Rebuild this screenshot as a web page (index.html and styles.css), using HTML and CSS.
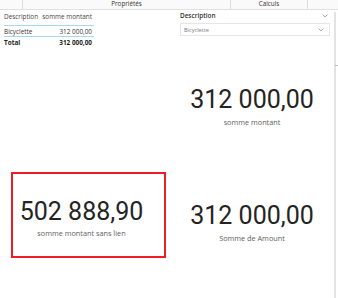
FILE: index.html
```html
<!DOCTYPE html>
<html lang="fr">
<head>
    <meta charset="UTF-8">
    <meta name="viewport" content="width=device-width, initial-scale=1.0">
    <title>Rapport</title>
    <link rel="stylesheet" href="styles.css">
</head>
<body>
    <div class="topbar">
        <div class="tab tab-first"></div>
        <div class="tab tab-props">Propriétés</div>
        <div class="tab tab-calc">Calculs</div>
        <div class="tab tab-last"></div>
    </div>
    <div class="canvas">
        <div class="left">
            <div class="tbl">
                <div class="row head">
                    <div class="col-desc">Description</div>
                    <div class="col-val">somme montant</div>
                </div>
                <div class="row line">
                    <div class="col-desc">Bicyclette</div>
                    <div class="col-val">312 000,00</div>
                </div>
                <div class="row total">
                    <div class="col-desc">Total</div>
                    <div class="col-val">312 000,00</div>
                </div>
            </div>
            <div class="card card-marked">
                <div class="big">502 888,90</div>
                <div class="label">somme montant sans lien</div>
            </div>
        </div>
        <div class="right">
            <div class="slicer">
                <div class="slicer-head">
                    <span>Description</span>
                    <svg class="chev" width="6" height="4" viewBox="0 0 6 4"><polyline points="0.5,0.5 3,3 5.5,0.5" fill="none" stroke="#999" stroke-width="0.8"/></svg>
                </div>
                <div class="dropdown">
                    <span>Bicyclette</span>
                    <svg class="chev" width="6" height="4" viewBox="0 0 6 4"><polyline points="0.5,0.5 3,3 5.5,0.5" fill="none" stroke="#999" stroke-width="0.8"/></svg>
                </div>
            </div>
            <div class="card card-one">
                <div class="big">312 000,00</div>
                <div class="label">somme montant</div>
            </div>
            <div class="card card-two">
                <div class="big">312 000,00</div>
                <div class="label">Somme de Amount</div>
            </div>
        </div>
        <div class="scroll"><span class="tick"></span></div>
    </div>
</body>
</html>
```

FILE: styles.css
```css
body {
    margin: 0;
    background: #fff;
    font-family: "Open Sans", "Noto Sans", sans-serif;
    color: #333;
}
.topbar {
    display: flex;
    height: 9px;
    border-bottom: 1px solid #e1e1e1;
    background: #fafafa;
    overflow: hidden;
}
.tab {
    border-right: 1px solid #dcdcdc;
    font-size: 6.3px;
    line-height: 7px;
    text-align: center;
    color: #333;
}
.tab-first {
    width: 22px;
}
.tab-props {
    width: 207px;
}
.tab-calc {
    width: 76px;
}
.tab-last {
    flex: 1;
    border-right: none;
}
.canvas {
    display: flex;
    height: 288px;
}
.left {
    width: 170px;
}
.tbl {
    margin-left: 4px;
    width: 90px;
    font-size: 6.4px;
    color: #333;
}
.row {
    display: flex;
    line-height: 9px;
}
.row.head {
    padding: 2px 0 4px;
    border-bottom: 1px solid #a9d7f2;
    color: #444;
}
.row.line {
    padding-top: 1px;
    border-bottom: 1px solid #a9d7f2;
}
.row.total {
    padding-top: 1px;
    font-weight: 700;
    color: #222;
}
.col-desc {
    width: 37px;
}
.col-val {
    flex: 1;
    text-align: right;
    padding-right: 2px;
}
.card {
    text-align: center;
}
.big {
    font-family: Roboto, sans-serif;
    font-size: 25px;
    line-height: 30px;
    color: #252423;
}
.label {
    font-size: 7.3px;
    line-height: 10px;
    color: #605e5c;
}
.card-marked {
    margin: 125px 0 0 11px;
    height: 82px;
    border: 2px solid #ee1c25;
    padding-right: 14px;
    width: 137px;
}
.card-marked .big {
    margin-top: 23px;
}
.card-marked .label {
    margin-top: 1px;
}
.right {
    width: 164px;
}
.slicer {
    padding: 0 4px 0 10px;
}
.slicer-head {
    display: flex;
    justify-content: space-between;
    align-items: center;
    padding: 1px 2px 0 0;
    height: 9px;
    font-size: 6.4px;
    font-weight: 600;
    color: #333;
}
.dropdown {
    display: flex;
    justify-content: space-between;
    align-items: center;
    margin-top: 3px;
    border: 1px solid #e6e6e6;
    padding: 1px 5px 0 3px;
    box-sizing: border-box;
    height: 13px;
    font-size: 5.6px;
    color: #777;
}
.card-one .big {
    margin-top: 49px;
}
.card-one .label {
    margin-top: 2px;
}
.card-two .big {
    margin-top: 74px;
}
.card-two .label {
    margin-top: 2px;
}
.scroll {
    position: relative;
    width: 2px;
    margin-top: 2px;
    background: #e3e3e3;
}
.tick {
    position: absolute;
    top: 53px;
    left: 1px;
    width: 3px;
    height: 1px;
    background: #bbb;
}
```
